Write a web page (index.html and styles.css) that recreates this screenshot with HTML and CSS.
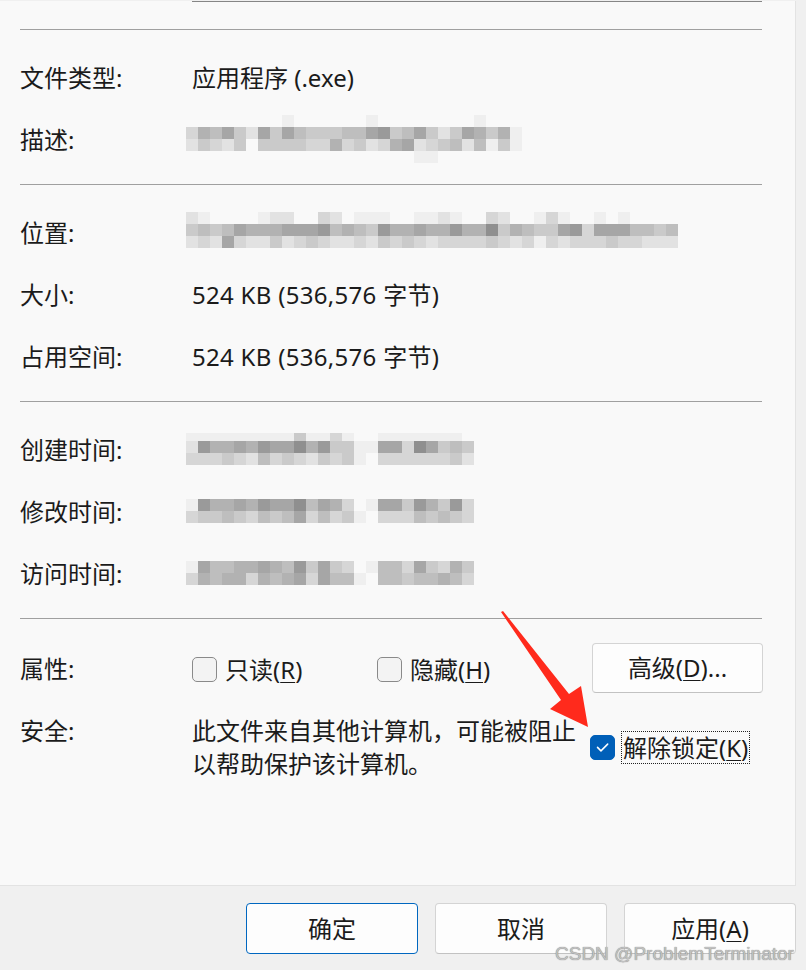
FILE: index.html
```html
<!DOCTYPE html>
<html lang="zh-CN">
<head>
<meta charset="utf-8">
<title>属性</title>
<link rel="stylesheet" href="styles.css">
</head>
<body>
<div class="window">
  <div class="panel">
    <div class="topfield"></div>

    <div class="section section-first">
      <div class="row"><div class="label">文件类型:</div><div class="value">应用程序 (.exe)</div></div>
      <div class="row"><div class="label">描述:</div>
        <div class="mosaic mosaic-desc">
          <i></i><i></i><i></i><i></i><i></i><i></i><i></i><i></i><i class="k1"></i><i></i><i></i><i></i><i></i><i></i><i></i><i class="k1"></i><i></i><i></i><i></i><i></i><i></i><i></i><i></i><i></i><i class="k1"></i><i></i><i></i><i></i>
          <i class="k3"></i><i class="k6"></i><i class="k5"></i><i class="k7"></i><i class="k4"></i><i class="k2"></i><i class="k7"></i><i class="k4"></i><i class="k7"></i><i class="k5"></i><i class="k4"></i><i class="k4"></i><i class="k4"></i><i class="k5"></i><i class="k5"></i><i class="k7"></i><i class="k8"></i><i class="k4"></i><i class="k5"></i><i class="k7"></i><i class="k4"></i><i class="k2"></i><i class="k4"></i><i class="k7"></i><i class="k6"></i><i class="k4"></i><i class="k6"></i><i class="k1"></i>
          <i class="k2"></i><i class="k4"></i><i class="k3"></i><i class="k2"></i><i class="k4"></i><i></i><i class="k4"></i><i class="k4"></i><i class="k4"></i><i class="k4"></i><i class="k3"></i><i class="k3"></i><i class="k6"></i><i class="k3"></i><i class="k4"></i><i class="k2"></i><i class="k3"></i><i class="k6"></i><i class="k7"></i><i class="k2"></i><i class="k3"></i><i class="k4"></i><i class="k5"></i><i class="k2"></i><i class="k5"></i><i class="k1"></i><i class="k4"></i><i class="k1"></i>
          <i></i><i></i><i></i><i></i><i></i><i></i><i></i><i></i><i></i><i></i><i></i><i></i><i></i><i></i><i></i><i></i><i></i><i></i><i></i><i class="k1"></i><i class="k1"></i><i></i><i></i><i></i><i></i><i></i><i></i><i></i>
        </div>
      </div>
    </div>

    <div class="section">
      <div class="row"><div class="label">位置:</div>
        <div class="mosaic mosaic-loc">
          <i class="k2"></i><i class="k1"></i><i></i><i></i><i></i><i></i><i class="k1"></i><i class="k2"></i><i class="k2"></i><i></i><i></i><i class="k3"></i><i class="k2"></i><i></i><i class="k1"></i><i class="k1"></i><i class="k1"></i><i></i><i></i><i class="k1"></i><i class="k1"></i><i class="k2"></i><i class="k1"></i><i></i><i></i><i class="k3"></i><i class="k2"></i><i></i><i></i><i class="k1"></i><i class="k3"></i><i class="k1"></i><i></i><i></i><i class="k1"></i><i></i><i class="k1"></i><i></i><i></i><i></i><i></i>
          <i class="k4"></i><i class="k5"></i><i class="k4"></i><i class="k5"></i><i class="k7"></i><i class="k6"></i><i class="k6"></i><i class="k6"></i><i class="k7"></i><i class="k7"></i><i class="k7"></i><i class="k8"></i><i class="k5"></i><i class="k6"></i><i class="k5"></i><i class="k4"></i><i class="k8"></i><i class="k6"></i><i class="k6"></i><i class="k7"></i><i class="k6"></i><i class="k6"></i><i class="k8"></i><i class="k6"></i><i class="k6"></i><i class="k9"></i><i class="k4"></i><i class="k6"></i><i class="k5"></i><i class="k4"></i><i class="k4"></i><i class="k7"></i><i class="k8"></i><i class="k3"></i><i class="k7"></i><i class="k7"></i><i class="k7"></i><i class="k5"></i><i class="k5"></i><i class="k4"></i><i class="k5"></i>
          <i class="k2"></i><i class="k3"></i><i class="k2"></i><i class="k7"></i><i class="k3"></i><i class="k2"></i><i class="k2"></i><i class="k4"></i><i class="k2"></i><i class="k3"></i><i class="k4"></i><i class="k3"></i><i class="k2"></i><i class="k2"></i><i class="k3"></i><i class="k2"></i><i class="k4"></i><i class="k3"></i><i class="k4"></i><i class="k3"></i><i class="k2"></i><i class="k3"></i><i class="k3"></i><i class="k3"></i><i class="k3"></i><i class="k4"></i><i class="k3"></i><i class="k2"></i><i class="k3"></i><i class="k1"></i><i class="k3"></i><i class="k2"></i><i class="k3"></i><i class="k3"></i><i class="k3"></i><i class="k4"></i><i class="k3"></i><i class="k3"></i><i class="k2"></i><i class="k2"></i><i class="k2"></i>
        </div>
      </div>
      <div class="row"><div class="label">大小:</div><div class="value value-latin">524 KB (536,576 字节)</div></div>
      <div class="row"><div class="label">占用空间:</div><div class="value value-latin">524 KB (536,576 字节)</div></div>
    </div>

    <div class="section">
      <div class="row"><div class="label">创建时间:</div>
        <div class="mosaic mosaic-time mosaic-created">
          <i class="k1"></i><i class="k1"></i><i class="k1"></i><i class="k1"></i><i class="k1"></i><i class="k1"></i><i class="k1"></i><i class="k1"></i><i class="k1"></i><i class="k4"></i><i class="k1"></i><i class="k1"></i><i class="k3"></i><i class="k1"></i><i></i><i></i><i class="k1"></i><i class="k1"></i><i class="k1"></i><i class="k1"></i><i class="k1"></i><i class="k1"></i><i class="k1"></i><i></i>
          <i class="k2"></i><i class="k8"></i><i class="k6"></i><i class="k6"></i><i class="k7"></i><i class="k6"></i><i class="k8"></i><i class="k7"></i><i class="k7"></i><i class="k9"></i><i class="k6"></i><i class="k8"></i><i class="k4"></i><i class="k4"></i><i class="k1"></i><i class="k1"></i><i class="k7"></i><i class="k7"></i><i class="k3"></i><i class="k9"></i><i class="k7"></i><i class="k4"></i><i class="k5"></i><i class="k4"></i>
          <i class="k3"></i><i class="k3"></i><i class="k3"></i><i class="k4"></i><i class="k3"></i><i class="k2"></i><i class="k5"></i><i class="k3"></i><i class="k4"></i><i class="k3"></i><i class="k2"></i><i class="k4"></i><i class="k3"></i><i class="k4"></i><i class="k1"></i><i></i><i class="k3"></i><i class="k3"></i><i class="k3"></i><i class="k3"></i><i class="k3"></i><i class="k3"></i><i class="k4"></i><i class="k2"></i>
        </div>
      </div>
      <div class="row"><div class="label">修改时间:</div>
        <div class="mosaic mosaic-time">
          <i class="k1"></i><i class="k8"></i><i class="k6"></i><i class="k6"></i><i class="k7"></i><i class="k6"></i><i class="k8"></i><i class="k7"></i><i class="k7"></i><i class="k9"></i><i class="k5"></i><i class="k7"></i><i class="k6"></i><i class="k3"></i><i></i><i class="k1"></i><i class="k7"></i><i class="k7"></i><i class="k4"></i><i class="k8"></i><i class="k6"></i><i class="k4"></i><i class="k8"></i><i class="k3"></i>
          <i class="k3"></i><i class="k4"></i><i class="k4"></i><i class="k5"></i><i class="k4"></i><i class="k3"></i><i class="k5"></i><i class="k4"></i><i class="k5"></i><i class="k7"></i><i class="k3"></i><i class="k5"></i><i class="k3"></i><i class="k4"></i><i class="k1"></i><i></i><i class="k3"></i><i class="k3"></i><i class="k3"></i><i class="k5"></i><i class="k4"></i><i class="k5"></i><i class="k4"></i><i class="k3"></i>
        </div>
      </div>
      <div class="row"><div class="label">访问时间:</div>
        <div class="mosaic mosaic-time">
          <i class="k1"></i><i class="k7"></i><i class="k5"></i><i class="k5"></i><i class="k6"></i><i class="k6"></i><i class="k7"></i><i class="k6"></i><i class="k5"></i><i class="k8"></i><i class="k4"></i><i class="k7"></i><i class="k4"></i><i class="k3"></i><i></i><i class="k1"></i><i class="k5"></i><i class="k5"></i><i class="k3"></i><i class="k7"></i><i class="k4"></i><i class="k3"></i><i class="k6"></i><i class="k4"></i>
          <i class="k3"></i><i class="k6"></i><i class="k5"></i><i class="k6"></i><i class="k6"></i><i class="k3"></i><i class="k6"></i><i class="k5"></i><i class="k6"></i><i class="k7"></i><i class="k3"></i><i class="k7"></i><i class="k5"></i><i class="k5"></i><i class="k1"></i><i></i><i class="k5"></i><i class="k5"></i><i class="k4"></i><i class="k5"></i><i class="k5"></i><i class="k6"></i><i class="k5"></i><i class="k3"></i>
        </div>
      </div>
    </div>

    <div class="section section-props">
      <div class="props-row">
        <div class="label">属性:</div>
        <label class="check-item check-item-ro"><span class="box"></span><span>只读(<u>R</u>)</span></label>
        <label class="check-item"><span class="box"></span><span>隐藏(<u>H</u>)</span></label>
        <button class="btn btn-adv" type="button">高级(<u>D</u>)...</button>
      </div>
      <div class="security-row">
        <div class="label">安全:</div>
        <div class="sec-text">此文件来自其他计算机，可能被阻止以帮助保护该计算机。</div>
        <label class="unblock">
          <span class="box box-checked">
            <svg class="tick" viewBox="0 0 24 24" width="24" height="24"><path d="M6.8 12.4 L10.4 16 L17.4 9" fill="none" stroke="#ffffff" stroke-width="1.6" stroke-linecap="round" stroke-linejoin="round"/></svg>
          </span>
          <span class="unblock-label">解除锁定(<u>K</u>)</span>
        </label>
      </div>
    </div>
  </div>

  <div class="footer">
    <button class="btn btn-primary" type="button">确定</button>
    <button class="btn" type="button">取消</button>
    <button class="btn" type="button">应用(<u>A</u>)</button>
  </div>

  <svg class="arrow" viewBox="0 0 100 130" width="100" height="130">
    <polygon points="6,7 8,6 74,89 86,81 93,122 55,104 66,95" fill="#ff2a1c"/>
  </svg>

  <div class="watermark">CSDN @ProblemTerminator</div>
</div>
</body>
</html>
```

FILE: styles.css
```css
* {
  box-sizing: border-box;
}

body {
  margin: 0;
  background: #f0f0f0;
  font-family: "Noto Sans", "Noto Sans CJK SC", sans-serif;
  font-size: 24px;
  color: #1b1b1b;
  overflow: hidden;
}

.window {
  position: relative;
  width: 806px;
  height: 970px;
  overflow: hidden;
}

.panel {
  width: 796px;
  height: 885px;
  background: #f9f9f9;
  border-right: 1px solid #e3e3e3;
  border-bottom: 1px solid #e3e3e3;
  padding: 0 33px 0 20px;
}

.topfield {
  margin: 1px 0 0 172px;
  height: 1px;
  background: #868686;
}

.section {
  border-top: 1px solid #a0a0a0;
  padding: 16px 0 14px;
}

.section-first {
  margin-top: 27px;
}

.row {
  display: flex;
  align-items: center;
  height: 62px;
}

.label {
  width: 172px;
  flex: none;
  line-height: 33px;
}

.value {
  line-height: 33px;
  white-space: nowrap;
}

.value-latin {
  letter-spacing: 0.3px;
}

/* pixelated (blurred) values */
.mosaic {
  display: grid;
  grid-auto-rows: 12px;
  margin-left: -6px;
}

.mosaic i {
  display: block;
}

.mosaic-desc {
  grid-template-columns: repeat(28, 12px);
}

.mosaic-loc {
  grid-template-columns: repeat(41, 12px);
  margin-top: -4px;
}

.mosaic-time {
  grid-template-columns: repeat(24, 12px);
}

.mosaic-created {
  grid-template-rows: 8px 12px 12px;
}

.k1 { background: #efefef; }
.k2 { background: #e2e2e2; }
.k3 { background: #d6d6d6; }
.k4 { background: #cacaca; }
.k5 { background: #bebebe; }
.k6 { background: #b2b2b2; }
.k7 { background: #a6a6a6; }
.k8 { background: #9a9a9a; }
.k9 { background: #8f8f8f; }

/* attributes / security */
.section-props {
  padding-top: 24px;
}

.props-row {
  display: flex;
  align-items: center;
  height: 50px;
}

.check-item {
  display: flex;
  align-items: center;
  gap: 8px;
  line-height: 33px;
  margin-top: 2px;
}

.check-item-ro {
  width: 185px;
}

u {
  text-decoration-thickness: 1px;
  text-underline-offset: 3px;
}

.box {
  width: 25px;
  height: 25px;
  flex: none;
  border: 1.5px solid #8a8a8a;
  border-radius: 5px;
  background: #f3f3f3;
}

.box-checked {
  background: #005fb8;
  border-color: #005fb8;
  display: flex;
  align-items: center;
  justify-content: center;
}

.tick {
  display: block;
}

.security-row {
  display: flex;
  align-items: center;
  margin-top: 21px;
}

.security-row .label {
  align-self: flex-start;
}

.sec-text {
  width: 398px;
  flex: none;
  line-height: 33px;
}

.unblock {
  display: flex;
  align-items: center;
  gap: 7px;
}

.unblock-label {
  outline: 1px dotted #222;
  line-height: 31px;
  padding: 0 1px;
}

/* buttons */
.btn {
  width: 172px;
  height: 51px;
  flex: none;
  border: 1px solid #d4d4d4;
  border-bottom-color: #c2c2c2;
  border-radius: 4px;
  background: #fdfdfd;
  font: inherit;
  line-height: 28px;
  color: inherit;
  display: flex;
  align-items: center;
  justify-content: center;
  padding: 0;
}

.btn-adv {
  width: 171px;
  height: 50px;
  margin-left: auto;
  margin-right: -1px;
}

.btn-primary {
  border-color: #0067c0;
}

.footer {
  display: flex;
  justify-content: flex-end;
  gap: 17px;
  padding: 17px 10px 0 0;
}

/* annotation */
.arrow {
  position: absolute;
  left: 495px;
  top: 605px;
}

.watermark {
  position: absolute;
  left: 555px;
  top: 946px;
  font-family: "Liberation Sans", sans-serif;
  font-size: 19px;
  line-height: 15px;
  color: #c0c0c0;
  text-shadow: 0 0 1px #666666;
}
```
